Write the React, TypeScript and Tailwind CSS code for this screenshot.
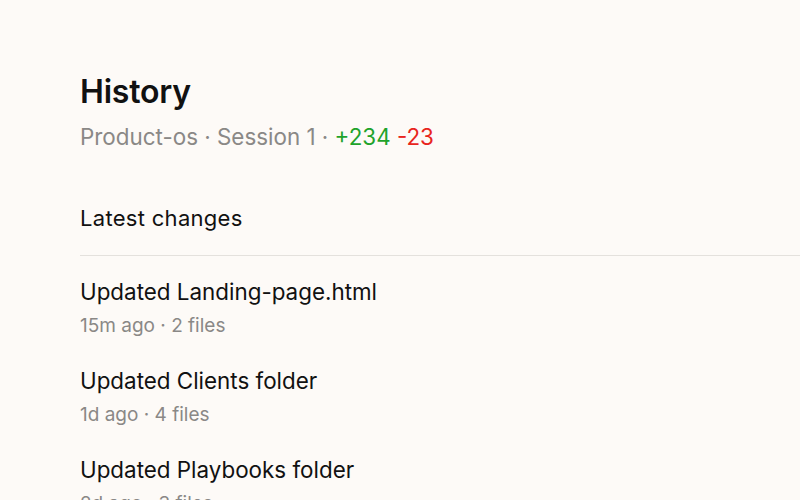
import React from "react";

const changes = [
  { title: "Updated Landing-page.html", meta: "15m ago · 2 files" },
  { title: "Updated Clients folder", meta: "1d ago · 4 files" },
  { title: "Updated Playbooks folder", meta: "2d ago · 3 files" },
  { title: "Updated Pricing.md", meta: "3d ago · 1 file" },
];

const App = () => {
  return (
    <div
      className="h-screen bg-[#fdfaf7] pl-20 pt-[72px] text-[#111111] overflow-hidden"
      style={{ fontFamily: "Inter, 'Noto Sans', sans-serif" }}
    >
      <h1 className="text-[32px] font-semibold leading-[40px] tracking-[-0.2px]">History</h1>
      <div className="mt-[10px] text-[22.4px] leading-[30px] text-[#8a8886]">
        Product-os · Session 1 · <span className="text-[#1fa32b]">+234</span>{" "}
        <span className="text-[#e8251d]">-23</span>
      </div>

      <div className="mt-[51px] text-[22px] leading-[30px] tracking-[0.3px]">Latest changes</div>
      <div className="mt-[22px] h-px bg-[#e4e1dd]" />

      <div className="flex flex-col pt-[21px] gap-[27px]">
        {changes.map((c) => (
          <div key={c.title} className="flex flex-col gap-[6px]">
            <div className="text-[22.4px] leading-[30px]">{c.title}</div>
            <div className="text-[19px] leading-[26px] text-[#8a8886]">{c.meta}</div>
          </div>
        ))}
      </div>
    </div>
  );
};

export default App;
